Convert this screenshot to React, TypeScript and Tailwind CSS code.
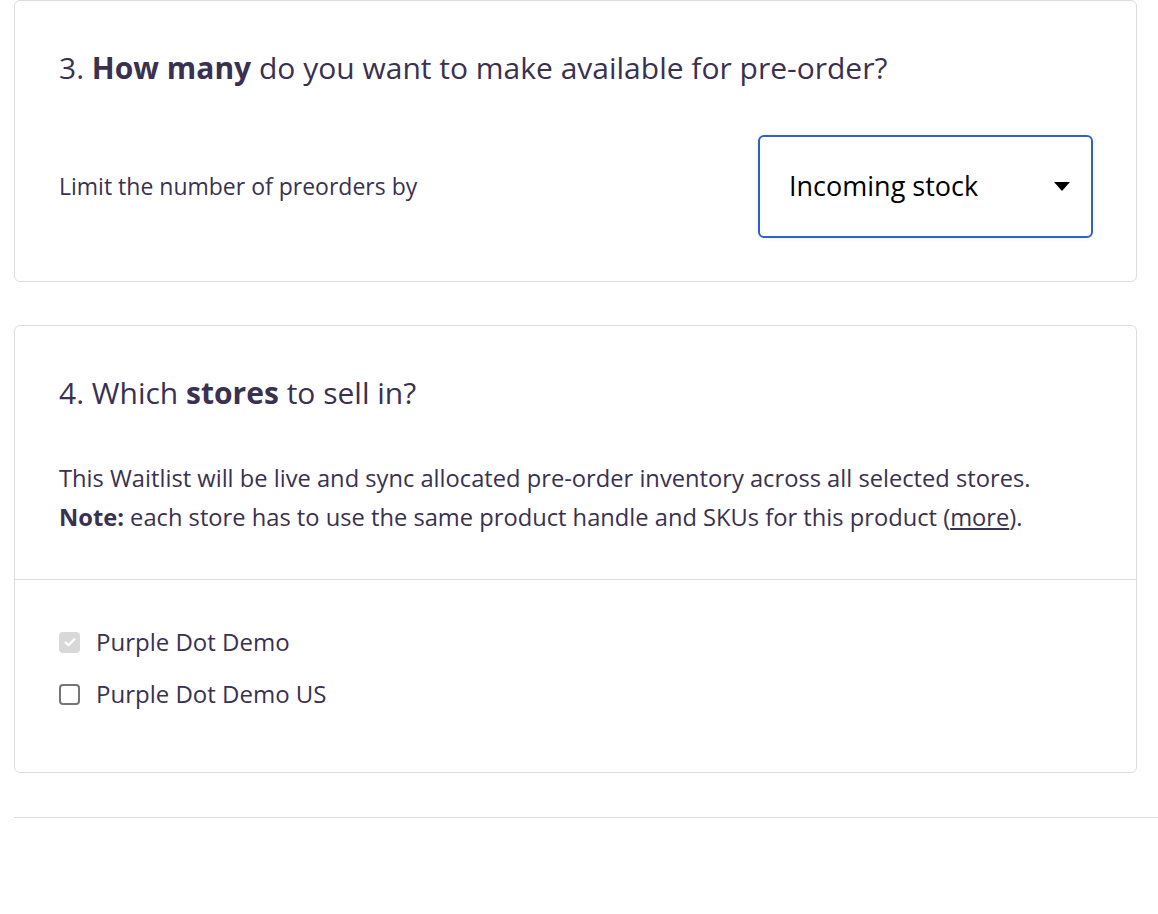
const Checkbox = ({ checked, disabled }: { checked?: boolean; disabled?: boolean }) => {
  if (checked && disabled) {
    return (
      <span className="flex h-[21px] w-[21px] items-center justify-center rounded-[4px] bg-[#d8d8d8]">
        <svg viewBox="0 0 16 16" className="h-[14px] w-[14px]" fill="none">
          <path d="M3 8.5l3.2 3.2L13 4.8" stroke="#fff" strokeWidth="2.6" strokeLinecap="round" strokeLinejoin="round" />
        </svg>
      </span>
    );
  }
  return <span className="block h-[21px] w-[21px] rounded-[4px] border-2 border-[#767676] bg-white" />;
};

const App = () => {
  return (
    <div className="min-h-[914px] bg-white pl-[14px] font-['Open_Sans',sans-serif] text-[#3a3150]">
      <section className="mr-[21px] rounded-[6px] border border-[#dcdcdc] pt-[43px] pr-[43px] pb-[43px] pl-[44px]">
        <h2 className="text-[30px] leading-[48px]">
          3. <span className="font-bold">How many</span> do you want to make available for pre-order?
        </h2>
        <div className="mt-[43px] flex items-center justify-between">
          <span className="text-[23px]">Limit the number of preorders by</span>
          <div className="flex h-[103px] w-[335px] items-center justify-between rounded-[6px] border-2 border-[#2f62c8] pr-[21px] pl-[29px] text-black shadow-[0_0_5px_rgba(0,0,0,0.08)]">
            <span className="text-[27px]">Incoming stock</span>
            <svg viewBox="0 0 16 9" className="h-[9px] w-[16px]">
              <path d="M0 0h16L8 9z" fill="#000" />
            </svg>
          </div>
        </div>
      </section>

      <section className="mt-[43px] mr-[21px] rounded-[6px] border border-[#dcdcdc]">
        <div className="border-b border-[#dcdcdc] pt-[43px] pr-[43px] pb-[42px] pl-[44px]">
          <h2 className="text-[30px] leading-[48px]">
            4. Which <span className="font-bold">stores</span> to sell in?
          </h2>
          <p className="mt-[42px] text-[23.7px] leading-[39px]">
            This Waitlist will be live and sync allocated pre-order inventory across all selected stores.
            <br />
            <span className="font-bold">Note:</span> each store has to use the same product handle and SKUs for this product (
            <a href="#" className="underline">more</a>).
          </p>
        </div>
        <div className="flex flex-col gap-[22px] pt-[47px] pb-[63px] pl-[44px]">
          <label className="flex items-center gap-[16px] text-[24px] leading-[30px]">
            <Checkbox checked disabled />
            Purple Dot Demo
          </label>
          <label className="flex items-center gap-[16px] text-[24px] leading-[30px]">
            <Checkbox />
            Purple Dot Demo US
          </label>
        </div>
      </section>

      <div className="mt-[44px] border-t border-[#dcdcdc]" />
    </div>
  );
};

export default App;
